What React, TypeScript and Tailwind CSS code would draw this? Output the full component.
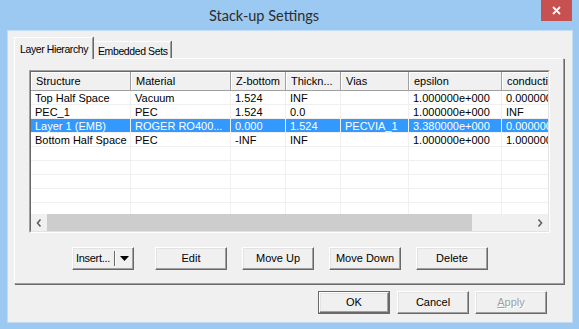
import { ReactNode } from 'react';

const columns = [
  { label: 'Structure', width: 100 },
  { label: 'Material', width: 100 },
  { label: 'Z-bottom', width: 55 },
  { label: 'Thickn...', width: 55 },
  { label: 'Vias', width: 68 },
  { label: 'epsilon', width: 93 },
  { label: 'conductivity', width: 110 },
];

const rows = [
  ['Top Half Space', 'Vacuum', '1.524', 'INF', '', '1.000000e+000', '0.000000e+000'],
  ['PEC_1', 'PEC', '1.524', '0.0', '', '1.000000e+000', 'INF'],
  ['Layer 1 (EMB)', 'ROGER RO400...', '0.000', '1.524', 'PECVIA_1', '3.380000e+000', '0.000000e+000'],
  ['Bottom Half Space', 'PEC', '-INF', 'INF', '', '1.000000e+000', '1.000000e+000'],
];

const selectedRow = 2;

const Button = ({
  children,
  width = 72,
  isDefault = false,
  disabled = false,
}: {
  children: ReactNode;
  width?: number;
  isDefault?: boolean;
  disabled?: boolean;
}) => (
  <div
    className={`h-[23px] flex items-center justify-center bg-[#f0f0f0] ${
      isDefault ? 'border border-[#696969]' : ''
    }`}
    style={{ width }}
  >
    <div
      className={`w-full h-full flex items-center justify-center border border-t-white border-l-white border-r-[#696969] border-b-[#696969] shadow-[inset_-1px_-1px_0_#a0a0a0,inset_1px_1px_0_#e3e3e3] ${
        disabled ? 'text-[#a0a0a0] [text-shadow:1px_1px_0_#fff]' : 'text-black'
      }`}
    >
      {children}
    </div>
  </div>
);

const Chevron = ({ dir }: { dir: 'left' | 'right' }) => (
  <svg width="6" height="8" viewBox="0 0 6 8">
    <path
      d={dir === 'left' ? 'M4.5 0.5 L1.5 4 L4.5 7.5' : 'M1.5 0.5 L4.5 4 L1.5 7.5'}
      fill="none"
      stroke="#606060"
      strokeWidth="1.6"
    />
  </svg>
);

const App = () => {
  const emptyRows = 5;
  return (
    <div className="w-[579px] h-[329px] bg-[#9bc9f2] flex flex-col font-['Liberation_Sans',Arial,sans-serif] text-[11px] text-black overflow-hidden">
      {/* title bar */}
      <div className="h-[31px] flex items-start shrink-0">
        <div className="flex-1 h-full flex items-center pl-[209px] font-['Lato',sans-serif] text-[14.5px] text-[#2d2d2d]">
          Stack-up Settings
        </div>
        <div className="w-[31px] h-[21px] mr-[7px] bg-[#c75050] flex items-center justify-center">
          <svg width="9" height="9" viewBox="0 0 9 9">
            <path d="M1 1 L8 8 M8 1 L1 8" stroke="#fff" strokeWidth="1.8" />
          </svg>
        </div>
      </div>

      {/* client */}
      <div className="flex-1 ml-[8px] mr-[7px] mb-[7px] bg-[#f0f0f0] flex flex-col shadow-[0_0_0_1px_#c2ddf5]">
        {/* tabs */}
        <div className="h-[27px] flex items-end pl-[6px] shrink-0 whitespace-nowrap text-[10.5px] tracking-[-0.4px]">
          <div className="relative z-10 -mb-px h-[22px] w-[79px] bg-[#f0f0f0] border-t border-l border-white border-r border-r-[#a0a0a0] shadow-[1px_0_0_#696969] pl-[5px] pt-[4px]">
            Layer Hierarchy
          </div>
          <div className="h-[17px] w-[77px] border-t border-white border-r border-r-[#a0a0a0] shadow-[1px_0_0_#696969] pl-[4px] pt-[2px] ml-px">
            Embedded Sets
          </div>
        </div>

        {/* panel */}
        <div className="ml-[6px] w-[550px] h-[226px] shrink-0 border border-t-white border-l-white border-r-[#a0a0a0] border-b-[#a0a0a0] shadow-[1px_1px_0_#696969] flex flex-col">
          {/* list view */}
          <div className="ml-[14px] mt-[11px] w-[521px] h-[163px] border border-t-[#a0a0a0] border-l-[#a0a0a0] border-r-white border-b-white">
            <div className="w-full h-full border border-t-[#696969] border-l-[#696969] border-r-[#e3e3e3] border-b-[#e3e3e3] bg-white flex flex-col overflow-hidden">
              {/* header */}
              <div className="h-[19px] flex shrink-0">
                {columns.map((col) => (
                  <div
                    key={col.label}
                    className="h-full shrink-0 bg-[#f0f0f0] border-r border-b border-[#a0a0a0] shadow-[inset_1px_1px_0_#fff] flex items-center pl-[5px] pt-[1px] whitespace-nowrap overflow-hidden"
                    style={{ width: col.width }}
                  >
                    {col.label}
                  </div>
                ))}
              </div>
              {/* rows */}
              <div className="flex-1 overflow-hidden">
                {rows.map((row, r) => (
                  <div
                    key={r}
                    className={`h-[14px] flex ${r === selectedRow ? 'bg-[#3399ff] text-white' : ''}`}
                  >
                    {row.map((cell, c) => (
                      <div
                        key={c}
                        className="h-full shrink-0 border-r border-b border-[#f0f0f0] flex items-center pl-[4px] pt-[1px] whitespace-nowrap overflow-hidden"
                        style={{ width: columns[c].width }}
                      >
                        {cell}
                      </div>
                    ))}
                  </div>
                ))}
                {Array.from({ length: emptyRows }).map((_, r) => (
                  <div key={`e${r}`} className="h-[14px] flex">
                    {columns.map((col) => (
                      <div
                        key={col.label}
                        className="h-full shrink-0 border-r border-b border-[#f0f0f0]"
                        style={{ width: col.width }}
                      />
                    ))}
                  </div>
                ))}
              </div>
              {/* horizontal scrollbar */}
              <div className="h-[17px] flex bg-[#f0f0f0] shrink-0">
                <div className="w-[16px] h-full flex items-center justify-center">
                  <Chevron dir="left" />
                </div>
                <div className="w-[425px] h-full bg-[#cdcdcd]" />
                <div className="flex-1" />
                <div className="w-[17px] h-full flex items-center justify-center">
                  <Chevron dir="right" />
                </div>
              </div>
            </div>
          </div>

          {/* panel buttons */}
          <div className="mt-[14px] pl-[57px] flex">
            <div className="w-[62px] h-[23px] flex bg-[#f0f0f0] border border-t-white border-l-white border-r-[#696969] border-b-[#696969] shadow-[inset_-1px_-1px_0_#a0a0a0,inset_1px_1px_0_#e3e3e3]">
              <div className="w-[41px] h-full flex items-center pl-[3px] tracking-[-0.3px]">Insert...</div>
              <div className="w-[2px] h-[15px] self-center border-l border-[#696969] border-r border-r-white" />
              <div className="flex-1 flex items-center justify-center pr-[1px]">
                <svg width="9" height="5" viewBox="0 0 9 5">
                  <path d="M0 0 L9 0 L4.5 5 Z" fill="#000" />
                </svg>
              </div>
            </div>
            <div className="ml-[21px] flex gap-[15px]">
              <Button>Edit</Button>
              <Button>Move Up</Button>
              <Button>Move Down</Button>
              <Button>Delete</Button>
            </div>
          </div>
        </div>

        {/* dialog buttons */}
        <div className="mt-[7px] flex justify-end pr-[25px]">
          <Button isDefault>OK</Button>
          <div className="ml-[7px]">
            <Button>Cancel</Button>
          </div>
          <div className="ml-[6px]">
            <Button disabled>
              <span>
                <span className="underline">A</span>pply
              </span>
            </Button>
          </div>
        </div>
      </div>
    </div>
  );
};

export default App;
